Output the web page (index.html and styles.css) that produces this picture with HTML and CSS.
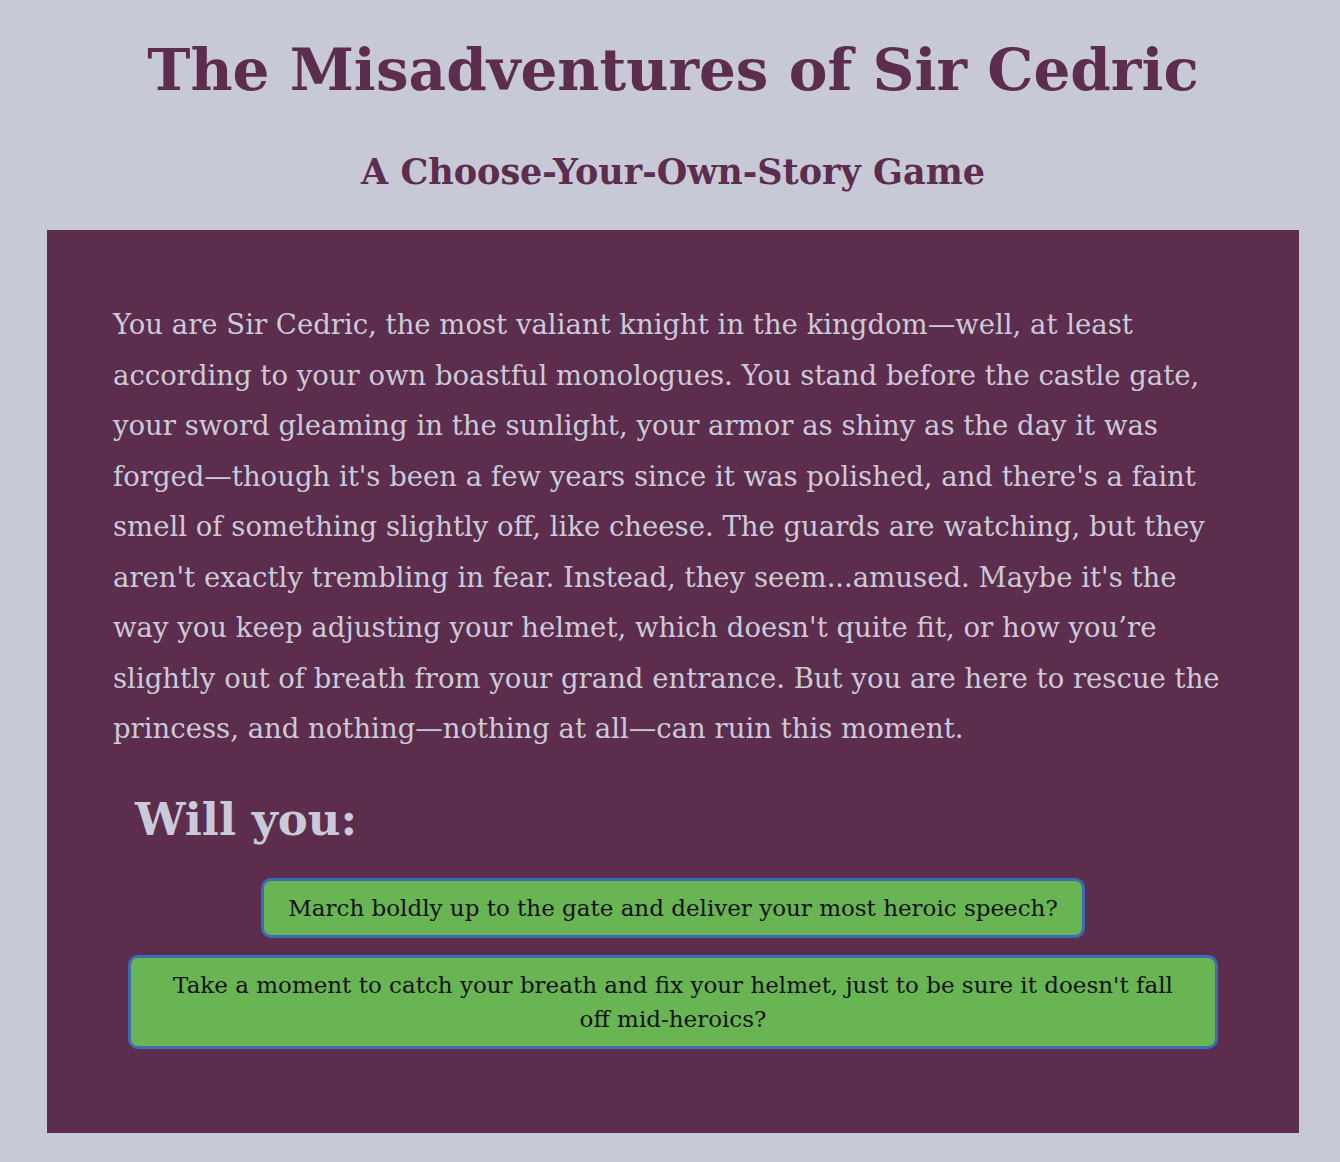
FILE: index.html
```html
<!DOCTYPE html>
<html lang="en">
<head>
<meta charset="utf-8">
<title>The Misadventures of Sir Cedric</title>
<link rel="stylesheet" href="styles.css">
</head>
<body>
<div class="page">
  <header class="masthead">
    <h1 class="title">The Misadventures of Sir Cedric</h1>
    <h2 class="subtitle">A Choose-Your-Own-Story Game</h2>
  </header>
  <main class="story">
    <p class="narration">You are Sir Cedric, the most valiant knight in the kingdom—well, at least according to your own boastful monologues. You stand before the castle gate, your sword gleaming in the sunlight, your armor as shiny as the day it was forged—though it's been a few years since it was polished, and there's a faint smell of something slightly off, like cheese. The guards are watching, but they aren't exactly trembling in fear. Instead, they seem...amused. Maybe it's the way you keep adjusting your helmet, which doesn't quite fit, or how you’re slightly out of breath from your grand entrance. But you are here to rescue the princess, and nothing—nothing at all—can ruin this moment.</p>
    <h2 class="prompt">Will you:</h2>
    <div class="choices">
      <button class="choice">March boldly up to the gate and deliver your most heroic speech?</button>
      <button class="choice">Take a moment to catch your breath and fix your helmet, just to be sure it doesn't fall off mid-heroics?</button>
    </div>
  </main>
</div>
</body>
</html>
```
FILE: styles.css
```css
html, body {
  margin: 0;
  padding: 0;
  background: #c8c9d6;
}
body {
  font-family: "DejaVu Serif", Georgia, serif;
  color: #5c2d4c;
}
.page {
  width: 1252px;
  margin-left: 47px;
  padding-top: 40px;
  padding-bottom: 29px;
}
.masthead {
  display: flex;
  flex-direction: column;
  align-items: center;
}
.title {
  margin: 0;
  font-size: 58px;
  line-height: 60px;
  font-weight: bold;
}
.subtitle {
  margin: 52px 0 0;
  font-size: 35px;
  line-height: 40px;
  font-weight: bold;
}
.story {
  margin-top: 38px;
  background: #5c2d4c;
  color: #cbcad9;
  padding: 69px 66px 84px;
}
.narration {
  margin: 0 10px 0 0;
  font-size: 27.5px;
  line-height: 50.5px;
}
.prompt {
  margin: 41px 0 0 22px;
  font-size: 45px;
  line-height: 50px;
  font-weight: bold;
}
.choices {
  margin-top: 33px;
  display: flex;
  flex-direction: column;
  align-items: center;
  gap: 17px;
}
.choice {
  margin: 0 15px;
  font-family: "DejaVu Serif", Georgia, serif;
  font-size: 23px;
  line-height: 34px;
  color: #111;
  background: #69b554;
  border: 3px solid #3b6db5;
  border-radius: 10px;
  padding: 10px 24px;
  text-align: center;
  cursor: pointer;
}
```
